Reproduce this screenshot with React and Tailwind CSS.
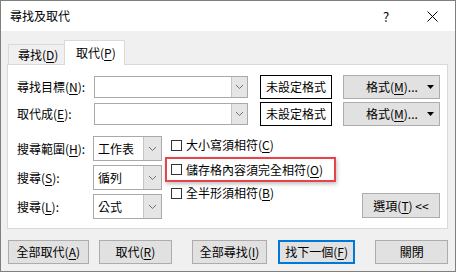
import React from 'react';

const font = "font-['Noto_Sans_CJK_TC',sans-serif]";

function Key({ k }) {
  return <span className="underline underline-offset-[2px] decoration-1">{k}</span>;
}

function Chevron() {
  return (
    <svg width="9" height="6" viewBox="0 0 9 6" fill="none">
      <path d="M1 1l3.5 3.5L8 1" stroke="#707070" strokeWidth="1" />
    </svg>
  );
}

function Combo({ w, h, value, arrowW = 16 }) {
  return (
    <div className={`flex border border-[#a9a9a9] bg-white ${w} ${h}`}>
      <div className="flex-1 flex items-center pl-[4px] text-[12px] leading-none">{value}</div>
      <div className={`flex items-center justify-center bg-[#e5e5e5] border-l border-[#c4c4c4] ${arrowW === 16 ? 'w-[16px]' : 'w-[18px]'}`}>
        <Chevron />
      </div>
    </div>
  );
}

function Btn({ w, children, primary, className = '' }) {
  return (
    <button
      className={`h-[24px] ${w} flex items-center justify-center text-[12px] leading-none bg-[#e1e1e1] ${
        primary ? 'border-2 border-[#0078d7]' : 'border border-[#adadad]'
      } ${className}`}
    >
      {children}
    </button>
  );
}

function FormatBtn() {
  return (
    <Btn w="w-[97px]" className="ml-[11px] !justify-start pl-[22px] pr-[5px]">
      <span>格式(<Key k="M" />)...</span>
      <svg className="ml-auto" width="7" height="4" viewBox="0 0 7 4">
        <path d="M0 0h7L3.5 4z" fill="#000" />
      </svg>
    </Btn>
  );
}

function Check({ children }) {
  return (
    <div className="flex items-center h-[18px]">
      <div className="w-[11px] h-[11px] border border-[#333333] bg-white" />
      <span className="ml-[4px] text-[12px] leading-none">{children}</span>
    </div>
  );
}

export default function App() {
  return (
    <div className={`w-[457px] h-[273px] bg-white text-black ${font}`}>
      <div className="w-[456px] h-[272px] border border-[#7f7f7f] bg-[#f0f0f0] flex flex-col">
        {/* title bar */}
        <div className="h-[30px] bg-white flex items-center shrink-0">
          <span className="ml-[9px] text-[12px] leading-none">尋找及取代</span>
          <span className="ml-auto w-[10px] text-center text-[13px] leading-none">?</span>
          <svg className="ml-[36px] mr-[17px]" width="11" height="11" viewBox="0 0 11 11">
            <path d="M0.5 0.5l10 10M10.5 0.5l-10 10" stroke="#000" strokeWidth="1" />
          </svg>
        </div>

        <div className="flex flex-col pl-[6px] pr-[7px]">
          {/* tabs */}
          <div className="flex items-end h-[33px] pl-[1px]">
            <div className="h-[20px] w-[57px] border border-b-0 border-[#d9d9d9] bg-[#f0f0f0] flex items-center pl-[9px] text-[12px] leading-none">
              尋找(<Key k="D" />)
            </div>
            <div className="h-[25px] w-[61px] -ml-[1px] -mb-[1px] relative z-10 border border-b-0 border-[#d9d9d9] bg-white flex items-center pl-[11px] text-[12px] leading-none">
              取代(<Key k="P" />)
            </div>
          </div>

          {/* panel */}
          <div className="h-[165px] border border-[#d9d9d9] bg-white pl-[9px] pr-[7px] pt-[10px]">
            <div className="flex items-center h-[23px]">
              <span className="w-[77px] text-[12px] leading-none">尋找目標(<Key k="N" />):</span>
              <Combo w="w-[154px]" h="h-[22px]" value="" />
              <Btn w="w-[72px]" className="ml-[12px] !border-black !bg-white">未設定格式</Btn>
              <FormatBtn />
            </div>
            <div className="flex items-center h-[23px] mt-[4px]">
              <span className="w-[77px] text-[12px] leading-none">取代成(<Key k="E" />):</span>
              <Combo w="w-[154px]" h="h-[22px]" value="" />
              <Btn w="w-[72px]" className="ml-[12px] !border-black !bg-white">未設定格式</Btn>
              <FormatBtn />
            </div>

            <div className="flex mt-[10px]">
              <div className="flex flex-col gap-[4px] mt-[1px]">
                <div className="flex items-center">
                  <span className="w-[76px] text-[12px] leading-none">搜尋範圍(<Key k="H" />):</span>
                  <Combo w="w-[69px]" h="h-[25px]" value="工作表" arrowW={18} />
                </div>
                <div className="flex items-center">
                  <span className="w-[76px] text-[12px] leading-none">搜尋(<Key k="S" />):</span>
                  <Combo w="w-[69px]" h="h-[25px]" value="循列" arrowW={18} />
                </div>
                <div className="flex items-center">
                  <span className="w-[76px] text-[12px] leading-none">搜尋(<Key k="L" />):</span>
                  <Combo w="w-[69px]" h="h-[25px]" value="公式" arrowW={18} />
                </div>
              </div>

              <div className="flex flex-col ml-[3px]">
                <div className="pl-[6px] mt-[1px]">
                  <Check>大小寫須相符(<Key k="C" />)</Check>
                </div>
                <div className="mt-[3px] w-[171px] h-[25px] border-2 border-[#e8434a] shadow-[1px_2px_4px_rgba(0,0,0,0.25)] flex items-center pl-[4px]">
                  <Check>儲存格內容須完全相符(<Key k="O" />)</Check>
                </div>
                <div className="pl-[6px] mt-[2px]">
                  <Check>全半形須相符(<Key k="B" />)</Check>
                </div>
              </div>

              <div className="ml-auto pt-[58px]">
                <Btn w="w-[78px]" className="h-[25px]">
                  選項(<Key k="T" />)&nbsp;&lt;&lt;
                </Btn>
              </div>
            </div>
          </div>

          {/* bottom buttons */}
          <div className="flex items-center mt-[11px] pl-[1px]">
            <Btn w="w-[81px]">全部取代(<Key k="A" />)</Btn>
            <Btn w="w-[74px]" className="ml-[10px]">取代(<Key k="R" />)</Btn>
            <Btn w="w-[75px]" className="ml-[20px]">全部尋找(<Key k="I" />)</Btn>
            <Btn w="w-[78px]" className="ml-[11px]" primary>找下一個(<Key k="F" />)</Btn>
            <Btn w="w-[73px]" className="ml-[20px]">關閉</Btn>
          </div>
        </div>
      </div>
    </div>
  );
}
